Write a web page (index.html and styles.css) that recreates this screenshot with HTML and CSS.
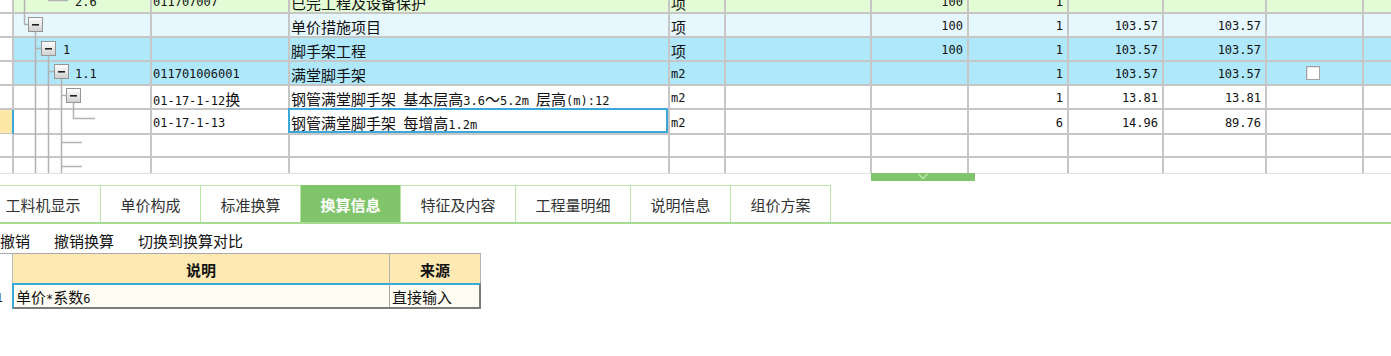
FILE: index.html
```html
<!DOCTYPE html>
<html>
<head>
<meta charset="utf-8">
<link rel="stylesheet" href="styles.css">
</head>
<body>
<div class="grid-wrap">
  <div class="grid">
    <div class="row green">
      <div class="c rh"></div>
      <div class="c a t3">2.6</div>
      <div class="c a">011707007</div>
      <div class="c">已完工程及设备保护</div>
      <div class="c">项</div>
      <div class="c"></div>
      <div class="c a r">100</div>
      <div class="c a r">1</div>
      <div class="c"></div>
      <div class="c"></div>
      <div class="c"></div>
      <div class="c last"></div>
    </div>
    <div class="row light">
      <div class="c rh"></div>
      <div class="c"></div>
      <div class="c"></div>
      <div class="c">单价措施项目</div>
      <div class="c">项</div>
      <div class="c"></div>
      <div class="c a r">100</div>
      <div class="c a r">1</div>
      <div class="c a r">103.57</div>
      <div class="c a r">103.57</div>
      <div class="c"></div>
      <div class="c last"></div>
    </div>
    <div class="row blue">
      <div class="c rh"></div>
      <div class="c a t1">1</div>
      <div class="c"></div>
      <div class="c">脚手架工程</div>
      <div class="c">项</div>
      <div class="c"></div>
      <div class="c a r">100</div>
      <div class="c a r">1</div>
      <div class="c a r">103.57</div>
      <div class="c a r">103.57</div>
      <div class="c"></div>
      <div class="c last"></div>
    </div>
    <div class="row blue">
      <div class="c rh"></div>
      <div class="c a t3">1.1</div>
      <div class="c a">011701006001</div>
      <div class="c">满堂脚手架</div>
      <div class="c a">m2</div>
      <div class="c"></div>
      <div class="c"></div>
      <div class="c a r">1</div>
      <div class="c a r">103.57</div>
      <div class="c a r">103.57</div>
      <div class="c mid"><span class="cb"></span></div>
      <div class="c last"></div>
    </div>
    <div class="row">
      <div class="c rh"></div>
      <div class="c"></div>
      <div class="c"><span class="tx"><span class="a">01-17-1-12</span>换</span></div>
      <div class="c"><span class="tx">钢管满堂脚手架<span class="a">&nbsp;</span>基本层高<span class="a">3.6</span>～<span class="a">5.2m&nbsp;</span>层高<span class="a">(m):12</span></span></div>
      <div class="c a">m2</div>
      <div class="c"></div>
      <div class="c"></div>
      <div class="c a r">1</div>
      <div class="c a r">13.81</div>
      <div class="c a r">13.81</div>
      <div class="c"></div>
      <div class="c last"></div>
    </div>
    <div class="row cur">
      <div class="c rh"></div>
      <div class="c"></div>
      <div class="c a">01-17-1-13</div>
      <div class="c sel"><span class="tx">钢管满堂脚手架<span class="a">&nbsp;</span>每增高<span class="a">1.2m</span></span></div>
      <div class="c a">m2</div>
      <div class="c"></div>
      <div class="c"></div>
      <div class="c a r">6</div>
      <div class="c a r">14.96</div>
      <div class="c a r">89.76</div>
      <div class="c"></div>
      <div class="c last"></div>
    </div>
    <div class="row">
      <div class="c rh"></div><div class="c"></div><div class="c"></div><div class="c"></div><div class="c"></div><div class="c"></div><div class="c"></div><div class="c"></div><div class="c"></div><div class="c"></div><div class="c"></div><div class="c last"></div>
    </div>
    <div class="row">
      <div class="c rh"></div><div class="c"></div><div class="c"></div><div class="c"></div><div class="c"></div><div class="c"></div><div class="c"></div><div class="c"></div><div class="c"></div><div class="c"></div><div class="c"></div><div class="c last"></div>
    </div>
  </div>
  <svg class="tree" width="150" height="173" viewBox="0 0 150 173">
    <defs>
      <linearGradient id="bx" x1="0" y1="0" x2="0" y2="1">
        <stop offset="0" stop-color="#ffffff"/>
        <stop offset="1" stop-color="#cfcfcf"/>
      </linearGradient>
    </defs>
    <g fill="none" stroke="#b2b2b2" stroke-width="1.5">
      <path d="M48 0.5 H68"/>
      <path d="M24.5 0 V24.5 H28"/>
      <path d="M35.5 32 V173"/>
      <path d="M35.5 48.5 H41"/>
      <path d="M48.5 56 V173"/>
      <path d="M48.5 71.5 H54"/>
      <path d="M61.5 79 V173"/>
      <path d="M61.5 95.5 H66"/>
      <path d="M73.5 103 V118.5 H95"/>
      <path d="M61.5 142.5 H82"/>
      <path d="M61.5 166.5 H82"/>
    </g>
    <g stroke="#959595" stroke-width="1" fill="url(#bx)">
      <rect x="28.5" y="17.5" width="14" height="14"/>
      <rect x="41.5" y="41.5" width="14" height="14"/>
      <rect x="54.5" y="64.5" width="14" height="14"/>
      <rect x="66.5" y="88.5" width="14" height="14"/>
    </g>
    <g fill="#222">
      <rect x="32" y="24" width="7" height="1.6"/>
      <rect x="45" y="48" width="7" height="1.6"/>
      <rect x="58" y="71" width="7" height="1.6"/>
      <rect x="70" y="95" width="7" height="1.6"/>
    </g>
  </svg>
</div>
<div class="splitter">
  <div class="handle">
    <svg width="12" height="7" viewBox="0 0 12 7"><path d="M1.5 1 L6 5.5 L10.5 1" fill="none" stroke="#b9e3a9" stroke-width="1.6"/></svg>
  </div>
</div>
<div class="tabs">
  <div class="tab w first">工料机显示</div>
  <div class="tab">单价构成</div>
  <div class="tab">标准换算</div>
  <div class="tab on">换算信息</div>
  <div class="tab w">特征及内容</div>
  <div class="tab w">工程量明细</div>
  <div class="tab">说明信息</div>
  <div class="tab">组价方案</div>
</div>
<div class="toolbar">
  <span>撤销</span>
  <span>撤销换算</span>
  <span>切换到换算对比</span>
</div>
<div class="sub">
  <div class="sub-head">
    <div class="sh-rh"></div>
    <div class="sh">说明</div>
    <div class="sh">来源</div>
  </div>
  <div class="sub-row">
    <div class="sr-rh"><span class="a">1</span></div>
    <div class="sr-sel">
      <div class="sr-c"><span class="tx">单价<span class="a">*</span>系数<span class="a">6</span></span></div>
      <div class="sr-c">直接输入</div>
    </div>
  </div>
</div>
</body>
</html>
```
FILE: styles.css
```css
* { box-sizing: border-box; }
html, body { margin: 0; padding: 0; background: #fff; }
body {
  width: 1391px;
  height: 356px;
  overflow: hidden;
  font-family: "Noto Sans CJK SC", "Noto Sans", sans-serif;
  font-size: 15px;
  color: #111;
}
.a { font-family: "DejaVu Sans Mono", "Liberation Mono", monospace; font-size: 12px; }
.tx { white-space: pre; }

.grid-wrap { position: relative; height: 173px; overflow: hidden; }
.grid { margin-top: -10px; }
.row {
  display: grid;
  grid-template-columns: 14px 138px 138px 380px 56px 146px 97px 100px 95px 103px 97px 1fr;
  height: 24px;
}
.row.green { background: #e3fcd5; }
.row.light { background: #e6f7fd; }
.row.blue { background: #aee8fa; }
.c {
  display: flex;
  align-items: center;
  padding: 2px 0 0 1px;
  border-right: 2px solid #c6c6c6;
  border-bottom: 2px solid #c6c6c6;
  white-space: nowrap;
  overflow: hidden;
  position: relative;
}
.c.last { border-right: none; }
.c.r { justify-content: flex-end; padding-right: 4px; }
.c.mid { justify-content: center; }
.c.rh { background: #fff; }
.c.t1 { padding-left: 49px; }
.c.t3 { padding-left: 61px; }
.row.cur .rh { background: #fde8a8; border-right-color: #3aa8d8; }
.c.sel { overflow: visible; }
.c.sel::after {
  content: "";
  position: absolute;
  top: -2px; left: -2px; right: 0; bottom: 0;
  border: 2px solid #3aa8d8;
}
.cb {
  width: 14px; height: 14px;
  margin-right: 5px;
  margin-top: -2px;
  background: #fff;
  border: 1px solid #a3a3a3;
  box-shadow: inset 1px 1px 0 #e6e6e6;
}
.tree { position: absolute; left: 0; top: 0; pointer-events: none; }

.splitter {
  height: 8px;
  background: linear-gradient(#e2e2e2 0 1px, transparent 1px);
}
.handle {
  margin-left: 871px;
  width: 104px;
  height: 8px;
  background: #80c56c;
  display: flex;
  justify-content: center;
  align-items: flex-start;
}
.handle svg { display: block; }

.tabs {
  display: flex;
  margin-top: 4px;
  height: 39px;
  border-bottom: 2px solid #a8db92;
}
.tab {
  width: 100px;
  flex: none;
  display: flex;
  align-items: center;
  justify-content: center;
  border-top: 1px solid #b9e5a6;
  border-right: 1px solid #b9e5a6;
  color: #333;
}
.tab.w { width: 115px; }
.tab.first { margin-left: -14px; }
.tab.on {
  background: #80c56c;
  border-top-color: #80c56c;
  color: #fff;
  font-weight: bold;
}

.toolbar {
  display: flex;
  gap: 24px;
  height: 29px;
  padding-top: 3px;
  align-items: center;
  color: #111;
}

.sub { margin-left: -20px; width: 501px; }
.sub-head {
  display: grid;
  grid-template-columns: 33px 377px 1fr;
  height: 30px;
  border-top: 1px solid #a9a9a9;
}
.sh-rh { background: #fff; border-right: 1px solid #bdbdbd; }
.sh {
  background: #fde9b1;
  border-right: 1px solid #b5b5b5;
  display: flex;
  align-items: center;
  justify-content: center;
  font-weight: bold;
  color: #111;
  padding-top: 1px;
}
.sub-row {
  display: grid;
  grid-template-columns: 32px 1fr;
  height: 24px;
}
.sr-rh {
  background: #fff;
  display: flex;
  align-items: center;
  justify-content: flex-end;
  padding-right: 9px;
  padding-top: 4px;
}
.sr-sel {
  display: grid;
  grid-template-columns: 376px 1fr;
  background: #fffdf3;
  border: 2px solid #3aa8d8;
  border-right-color: #7b7b7b;
  border-bottom-color: #7b7b7b;
}
.sr-c {
  display: flex;
  align-items: center;
  padding-left: 2px;
  padding-top: 1px;
  white-space: nowrap;
  overflow: hidden;
}
.sr-c:first-child { border-right: 1px solid #a9a9a9; }
```
